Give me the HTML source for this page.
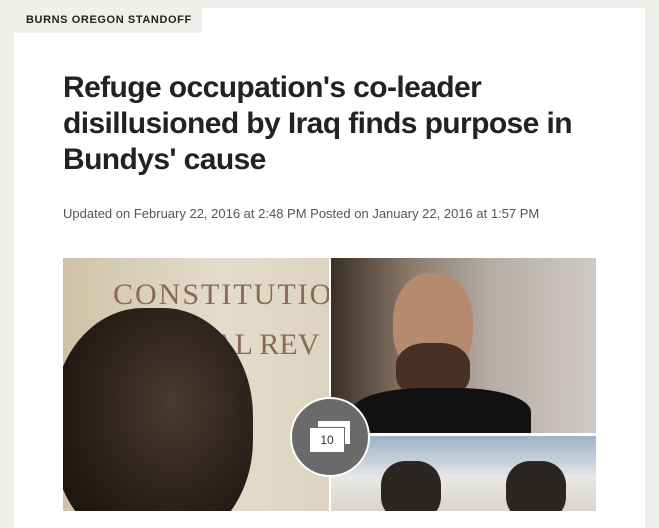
<!DOCTYPE html>
<html><head><meta charset="utf-8"><style>
body{margin:0;width:659px;height:511px;overflow:hidden;background:#efefeb;font-family:"Liberation Sans",sans-serif;position:relative}
.card{position:absolute;left:14px;top:8px;width:631px;height:520px;background:#fff}
.lab{position:absolute;left:14px;top:8px;width:188px;height:25px;background:#efefeb;font-size:11px;letter-spacing:0.6px;color:#222;line-height:25px;text-indent:12px;font-weight:bold;white-space:nowrap}
h1{position:absolute;left:63px;top:70px;margin:0;width:540px;font-size:30px;line-height:36px;font-weight:bold;color:#222;letter-spacing:-0.6px}
.date{position:absolute;left:63px;top:206px;font-size:13px;color:#555;white-space:nowrap}
.img{position:absolute;overflow:hidden}
</style></head><body>
<div class="card"></div>
<div class="lab">BURNS OREGON STANDOFF</div>
<h1>Refuge occupation's co-leader disillusioned by Iraq finds purpose in Bundys' cause</h1>
<div class="date">Updated on February 22, 2016 at 2:48 PM Posted on January 22, 2016 at 1:57 PM</div>
<div class="img" style="left:63px;top:258px;width:266px;height:253px;background:linear-gradient(90deg,#cfc2a8,#e4dccb 60%,#ddd3c0)">
 <div style="position:absolute;left:50px;top:20px;font:30px 'Liberation Serif',serif;color:#8a6a55;letter-spacing:2px">CONSTITUTIO</div>
 <div style="position:absolute;left:150px;top:70px;font:30px 'Liberation Serif',serif;color:#8a6a55">AL REV</div>
 <div style="position:absolute;left:-10px;top:50px;width:200px;height:240px;border-radius:45%;background:radial-gradient(ellipse at 60% 40%,#4a3a30,#1e1712 70%)"></div>
</div>
<div class="img" style="left:331px;top:258px;width:265px;height:175px;background:linear-gradient(90deg,#3a2e24,#8a7a6a 30%,#b5aca6 60%,#cfc9c5)">
 <div style="position:absolute;left:62px;top:15px;width:80px;height:105px;border-radius:45%;background:#b58a6e"></div>
 <div style="position:absolute;left:65px;top:85px;width:74px;height:55px;border-radius:40%;background:#4a3022"></div>
 <div style="position:absolute;left:20px;top:130px;width:180px;height:60px;border-radius:40% 40% 0 0;background:#111"></div>
</div>
<div class="img" style="left:331px;top:436px;width:265px;height:75px;background:linear-gradient(#9fb2c8,#c8d2dc 35%,#e8e8e8 55%,#d8d4cc)">
 <div style="position:absolute;left:50px;top:25px;width:60px;height:60px;border-radius:40%;background:#2b2622"></div>
 <div style="position:absolute;left:175px;top:25px;width:60px;height:60px;border-radius:40%;background:#2b2622"></div>
</div>
<div style="position:absolute;left:290px;top:397px;width:76px;height:76px;border-radius:50%;background:#6a6a6a;border:2px solid #fff">
 <div style="position:absolute;left:26px;top:22px;width:32px;height:23px;background:#fff"></div>
 <div style="position:absolute;left:17px;top:28px;width:34px;height:24px;background:#fff;border:1px solid #6a6a6a;font-size:12px;color:#333;text-align:center;line-height:24px">10</div>
</div>
</body></html>
